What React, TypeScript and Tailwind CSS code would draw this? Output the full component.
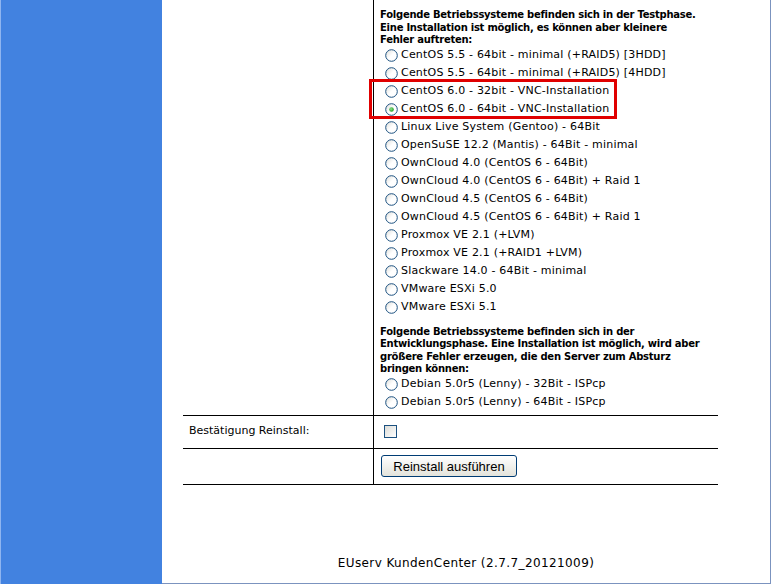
import React from "react";

const testing = [
  "CentOS 5.5 - 64bit - minimal (+RAID5) [3HDD]",
  "CentOS 5.5 - 64bit - minimal (+RAID5) [4HDD]",
  "CentOS 6.0 - 32bit - VNC-Installation",
  "CentOS 6.0 - 64bit - VNC-Installation",
  "Linux Live System (Gentoo) - 64Bit",
  "OpenSuSE 12.2 (Mantis) - 64Bit - minimal",
  "OwnCloud 4.0 (CentOS 6 - 64Bit)",
  "OwnCloud 4.0 (CentOS 6 - 64Bit) + Raid 1",
  "OwnCloud 4.5 (CentOS 6 - 64Bit)",
  "OwnCloud 4.5 (CentOS 6 - 64Bit) + Raid 1",
  "Proxmox VE 2.1 (+LVM)",
  "Proxmox VE 2.1 (+RAID1 +LVM)",
  "Slackware 14.0 - 64Bit - minimal",
  "VMware ESXi 5.0",
  "VMware ESXi 5.1",
];

const development = [
  "Debian 5.0r5 (Lenny) - 32Bit - ISPcp",
  "Debian 5.0r5 (Lenny) - 64Bit - ISPcp",
];

function Radio({ checked }: { checked?: boolean }) {
  return (
    <svg width="13" height="13" viewBox="0 0 13 13" className="shrink-0">
      <defs>
        <linearGradient id="rg" x1="0" y1="0" x2="1" y2="1">
          <stop offset="0" stopColor="#dcdcd7" />
          <stop offset="0.5" stopColor="#ffffff" />
          <stop offset="1" stopColor="#ffffff" />
        </linearGradient>
        <radialGradient id="dot" cx="0.4" cy="0.4" r="0.6">
          <stop offset="0" stopColor="#8ee08e" />
          <stop offset="1" stopColor="#21a121" />
        </radialGradient>
      </defs>
      <circle cx="6.5" cy="6.5" r="5.8" fill="url(#rg)" stroke="#1c5180" strokeWidth="1" />
      {checked && <circle cx="6.5" cy="6.5" r="2.3" fill="url(#dot)" />}
    </svg>
  );
}

function Option({ label, checked }: { label: string; checked?: boolean }) {
  return (
    <div className="flex h-[18px] items-center pl-[11px]">
      <Radio checked={checked} />
      <span className="ml-[3px] whitespace-nowrap tracking-[0.2px]">{label}</span>
    </div>
  );
}

export default function App() {
  return (
    <div className="relative flex h-[585px] w-[773px] overflow-hidden bg-white pb-[1px] font-['DejaVu_Sans',Verdana,sans-serif] text-[11px] text-black">
      <div className="w-[162px] shrink-0 border-l border-[#8fb5f0] bg-[#4282e0]" />

      <div className="mr-[2px] flex flex-1 flex-col border-r border-b border-[#7b93bf]">
        <div className="ml-[21px] w-[535px]">
          <div className="grid grid-cols-[190px_1fr]">
            <div />
            <div className="border-l border-black pt-[9px] pb-[3px]">
              <p className="whitespace-nowrap pl-[6px] text-[10px] font-bold leading-[12.5px] tracking-[-0.25px]">
                Folgende Betriebssysteme befinden sich in der Testphase.
                <br />
                Eine Installation ist möglich, es können aber kleinere
                <br />
                Fehler auftreten:
              </p>
              {testing.map((os, i) => (
                <Option key={os} label={os} checked={i === 3} />
              ))}
              <p className="mt-[9px] whitespace-nowrap pl-[6px] text-[10px] font-bold leading-[12.5px] tracking-[-0.25px]">
                Folgende Betriebssysteme befinden sich in der
                <br />
                Entwicklungsphase. Eine Installation ist möglich, wird aber
                <br />
                größere Fehler erzeugen, die den Server zum Absturz
                <br />
                bringen können:
              </p>
              {development.map((os) => (
                <Option key={os} label={os} />
              ))}
            </div>
          </div>

          <div className="grid h-[33px] grid-cols-[190px_1fr] border-t border-black">
            <div className="flex items-center pl-[6px]">Bestätigung Reinstall:</div>
            <div className="flex items-center border-l border-black pl-[10px]">
              <span className="h-[13px] w-[13px] border border-[#1c5180] bg-gradient-to-br from-[#dcdcd7] to-white" />
            </div>
          </div>

          <div className="grid h-[37px] grid-cols-[190px_1fr] border-t border-b border-black">
            <div />
            <div className="flex items-center border-l border-black pl-[7px]">
              <button className="h-[22px] w-[136px] rounded-[3px] border border-[#003c74] bg-gradient-to-b from-white to-[#e3e3db] font-['Liberation_Sans',Arial,sans-serif] text-[13px] leading-none">
                Reinstall ausführen
              </button>
            </div>
          </div>
        </div>

        <div className="mt-[70px] text-center font-['DejaVu_Sans',Verdana,sans-serif] text-[12px] leading-[16px] tracking-[0.4px]">
          EUserv KundenCenter (2.7.7_20121009)
        </div>
      </div>

      <div className="absolute left-[369px] top-[79px] h-[40px] w-[248px] border-[3px] border-[#e00000]" />
    </div>
  );
}
